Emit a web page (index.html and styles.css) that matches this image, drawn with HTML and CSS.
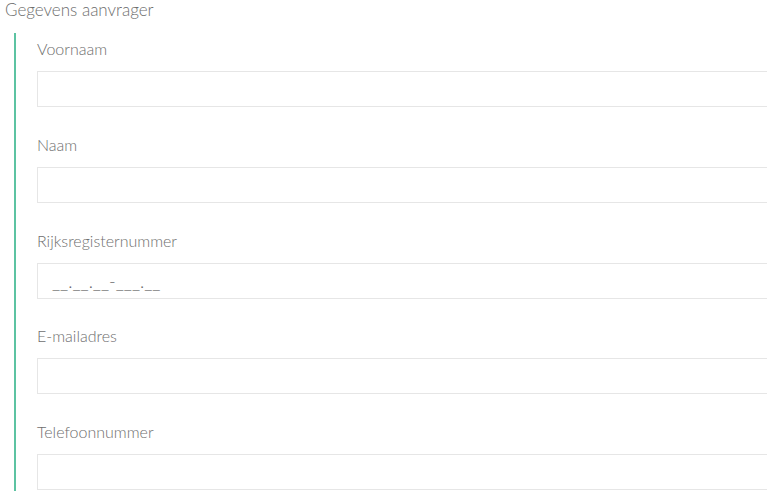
FILE: index.html
```html
<!DOCTYPE html>
<html lang="nl">
<head>
    <meta charset="UTF-8">
    <meta name="viewport" content="width=device-width, initial-scale=1.0">
    <title>Gegevens aanvrager</title>
    <link rel="stylesheet" href="styles.css">
</head>
<body>
    <div class="section-title">Gegevens aanvrager</div>

    <div class="group">
        <div class="field">
            <label for="voornaam">Voornaam</label>
            <input type="text" id="voornaam">
        </div>
        <div class="field">
            <label for="naam">Naam</label>
            <input type="text" id="naam">
        </div>
        <div class="field">
            <label for="rrn">Rijksregisternummer</label>
            <input type="text" id="rrn" class="masked" value="__.__.__-___.__">
        </div>
        <div class="field">
            <label for="email">E-mailadres</label>
            <input type="text" id="email">
        </div>
        <div class="field">
            <label for="tel">Telefoonnummer</label>
            <input type="text" id="tel">
        </div>
    </div>
</body>
</html>
```

FILE: styles.css
```css
body {
    font-family: Lato, 'Open Sans', Arial, sans-serif;
    font-weight: 300;
    color: #6e6e6e;
    margin: 0;
    overflow: hidden;
    background: #fff;
}
.section-title {
    font-size: 17px;
    line-height: 20px;
    padding-left: 5px;
    margin-bottom: 13px;
}
.group {
    margin-left: 14px;
    border-left: 2px solid #5cc3a2;
    padding: 6px 0 1px 21px;
}
.field {
    margin-bottom: 27.75px;
}
.field:last-child {
    margin-bottom: 0;
}
label {
    display: block;
    font-size: 16px;
    line-height: 20px;
    margin-bottom: 12px;
}
input {
    display: block;
    box-sizing: border-box;
    width: 800px;
    height: 36px;
    margin: 0;
    padding: 0 14px;
    border: 1px solid #e6e6e6;
    font-family: inherit;
    font-weight: 300;
    font-size: 16px;
    color: #666;
    outline: none;
}
.masked {
    font-size: 18px;
}
```
